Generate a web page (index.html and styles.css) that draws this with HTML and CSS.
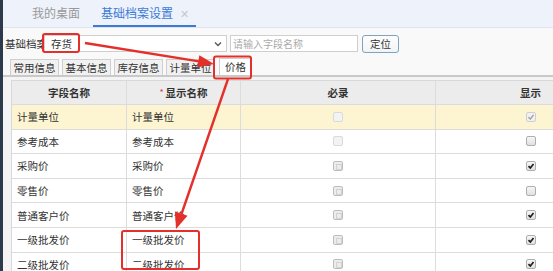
FILE: index.html
```html
<!DOCTYPE html>
<html lang="zh">
<head>
<meta charset="utf-8">
<title>基础档案设置</title>
<link rel="stylesheet" href="styles.css">
</head>
<body>
<div class="page">
  <div class="strip"></div>
  <div class="main">
    <div class="topbar">
      <div class="ttab">我的桌面</div>
      <div class="ttab active">基础档案设置<span class="close">✕</span></div>
    </div>
    <div class="toolbar">
      <span class="label">基础档案</span>
      <div class="select">
        <span class="sel-text">存货</span>
        <svg class="chev" viewBox="0 0 8 6"><path d="M1 1.5l3 3 3-3"/></svg>
      </div>
      <div class="input">请输入字段名称</div>
      <div class="btn">定位</div>
    </div>
    <div class="tabs">
      <div class="tab">常用信息</div>
      <div class="tab">基本信息</div>
      <div class="tab">库存信息</div>
      <div class="tab">计量单位</div>
      <div class="tab active">价格</div>
    </div>
    <div class="content">
      <div class="grid">
        <div class="th">字段名称</div>
        <div class="th"><span class="req">*</span>显示名称</div>
        <div class="th">必录</div>
        <div class="th">显示</div>

        <div class="td hl">计量单位</div><div class="td hl">计量单位</div>
        <div class="td hl c"><span class="cb off"></span></div>
        <div class="td hl c"><span class="cb dchk"><svg viewBox="0 0 12 12"><path d="M3 6.2l2.2 2.3 3.8-5"/></svg></span></div>

        <div class="td">参考成本</div><div class="td">参考成本</div>
        <div class="td c"><span class="cb off"></span></div>
        <div class="td c"><span class="cb"></span></div>

        <div class="td">采购价</div><div class="td">采购价</div>
        <div class="td c"><span class="cb dis"></span></div>
        <div class="td c"><span class="cb chk"><svg viewBox="0 0 12 12"><path d="M3 6.2l2.2 2.3 3.8-5"/></svg></span></div>

        <div class="td">零售价</div><div class="td">零售价</div>
        <div class="td c"><span class="cb dis"></span></div>
        <div class="td c"><span class="cb"></span></div>

        <div class="td">普通客户价</div><div class="td">普通客户价</div>
        <div class="td c"><span class="cb dis"></span></div>
        <div class="td c"><span class="cb chk"><svg viewBox="0 0 12 12"><path d="M3 6.2l2.2 2.3 3.8-5"/></svg></span></div>

        <div class="td">一级批发价</div><div class="td">一级批发价</div>
        <div class="td c"><span class="cb dis"></span></div>
        <div class="td c"><span class="cb chk"><svg viewBox="0 0 12 12"><path d="M3 6.2l2.2 2.3 3.8-5"/></svg></span></div>

        <div class="td">二级批发价</div><div class="td">二级批发价</div>
        <div class="td c"><span class="cb dis"></span></div>
        <div class="td c"><span class="cb chk"><svg viewBox="0 0 12 12"><path d="M3 6.2l2.2 2.3 3.8-5"/></svg></span></div>
      </div>
    </div>
  </div>
  <svg class="annot" viewBox="0 0 553 271" width="553" height="271">
    <rect x="43" y="34" width="36" height="18" rx="2"/>
    <rect x="214" y="56.5" width="37" height="22" rx="2"/>
    <rect x="122" y="231" width="77" height="38" rx="2"/>
    <line x1="85" y1="43" x2="199" y2="61.4"/>
    <polygon points="214,64 197.2,67.6 199.4,55.2"/>
    <line x1="228" y1="79" x2="181.5" y2="214"/>
    <polygon points="176,229 175,211.5 187.5,215.8"/>
  </svg>
</div>
</body>
</html>
```
FILE: styles.css
```css
* { box-sizing: border-box; }
html, body { margin: 0; padding: 0; }
body {
  width: 553px;
  height: 271px;
  overflow: hidden;
  font-family: "Noto Sans CJK SC", "Noto Sans", sans-serif;
  font-size: 10.5px;
  color: #333;
  background: #f6f6f6;
}
.page {
  position: relative;
  display: flex;
  width: 553px;
  height: 271px;
  overflow: hidden;
}
.strip {
  width: 3px;
  flex: none;
  background: #2c3a4c;
}
.main {
  flex: 1;
  display: flex;
  flex-direction: column;
  min-width: 0;
}
.topbar {
  height: 28px;
  flex: none;
  display: flex;
  align-items: stretch;
  padding-left: 21px;
  background: #eef2fb;
  border-bottom: 1px solid #dfe4ee;
}
.ttab {
  display: flex;
  align-items: center;
  padding: 0 8px 2px;
  font-size: 12px;
  color: #999;
  margin-right: 5px;
}
.ttab.active {
  color: #3b7bd6;
  border-bottom: 2px solid #3b7bd6;
  padding: 0 7px 0 8px;
}
.close {
  color: #c4c8d0;
  font-size: 11px;
  margin-left: 7px;
}
.toolbar {
  height: 28px;
  flex: none;
  display: flex;
  align-items: flex-start;
  padding: 7px 0 0 2px;
  background: #f9f9f9;
}
.label {
  width: 39px;
  white-space: nowrap;
  line-height: 17px;
  font-size: 10.5px;
}
.select {
  position: relative;
  width: 183px;
  height: 17px;
  border: 1px solid #cfcfcf;
  background: #fff;
  display: flex;
  align-items: center;
  justify-content: space-between;
  padding: 0 4px 0 6px;
}
.sel-text { line-height: 15px; }
.chev {
  width: 8px;
  height: 6px;
  fill: none;
  stroke: #555;
  stroke-width: 1.3;
}
.input {
  width: 128px;
  height: 17px;
  margin-left: 3px;
  border: 1px solid #cfcfcf;
  background: #fff;
  color: #aaa;
  font-size: 10px;
  line-height: 15px;
  padding-left: 2px;
}
.btn {
  width: 37px;
  height: 18px;
  margin-left: 4px;
  border: 1px solid #7ea3bb;
  border-radius: 3px;
  background: linear-gradient(#fdfdfd, #f1f4f6);
  text-align: center;
  line-height: 16px;
}
.tabs {
  height: 21px;
  flex: none;
  display: flex;
  align-items: flex-end;
  gap: 3px;
  padding-left: 7px;
  background: #f9f9f9;
  border-bottom: 2px solid #c9c9c9;
}
.tab {
  height: 16px;
  padding: 0 2.5px;
  border: 1px solid #cfcfcf;
  border-bottom: none;
  background: #f1f1f1;
  line-height: 15px;
  white-space: nowrap;
}
.tab.active {
  height: 17px;
  padding: 0 5px;
  background: #fff;
  margin-left: 1px;
}
.content {
  flex: 1;
  background: #f4f4f4;
  padding: 3px 0 0 8px;
  overflow: hidden;
}
.grid {
  display: grid;
  grid-template-columns: 115px 114px 195px 190px;
  grid-template-rows: 24px repeat(7, 24.6px);
  width: 614px;
  border-top: 1px solid #d9d9d9;
  border-left: 1px solid #d9d9d9;
  background: #fff;
}
.th, .td {
  border-right: 1px solid #dcdcdc;
  border-bottom: 1px solid #dcdcdc;
  display: flex;
  align-items: center;
  white-space: nowrap;
  overflow: hidden;
}
.th {
  background: #ececec;
  font-weight: bold;
  justify-content: center;
  font-size: 10.5px;
}
.req {
  color: #e0433d;
  font-weight: normal;
  font-size: 9px;
  margin-right: 2px;
}
.td {
  padding-left: 5px;
}
.td.c {
  justify-content: center;
  padding-left: 0;
}
.td.hl { background: #fdf4d2; }
.cb {
  display: block;
  width: 10px;
  height: 10px;
  border: 1px solid #aeaeae;
  border-radius: 2px;
  background: linear-gradient(#f6f6f6, #e0e0e0);
  position: relative;
}
.cb svg {
  position: absolute;
  left: -1px;
  top: -1px;
  width: 10px;
  height: 10px;
  fill: none;
  stroke: #1e1e1e;
  stroke-width: 2;
}
.cb.off {
  border-color: #dadada;
  background: #f3f3f3;
}
.cb.dis {
  border-color: #bdbdbd;
  background: #ececec;
}
.cb.dis::after {
  content: "";
  position: absolute;
  left: 2px;
  top: 2px;
  width: 4px;
  height: 4px;
  border: 1px solid #d2d2d2;
}
.cb.dchk {
  border-color: #cfcfcf;
  background: #f1f1f1;
}
.cb.dchk svg { stroke: #9a9a9a; stroke-width: 1.6; }
.annot {
  position: absolute;
  left: 0;
  top: 0;
  pointer-events: none;
}
.annot rect {
  fill: none;
  stroke: #e3302b;
  stroke-width: 2;
}
.annot line {
  stroke: #e3302b;
  stroke-width: 2.4;
}
.annot polygon {
  fill: #e3302b;
}
```
